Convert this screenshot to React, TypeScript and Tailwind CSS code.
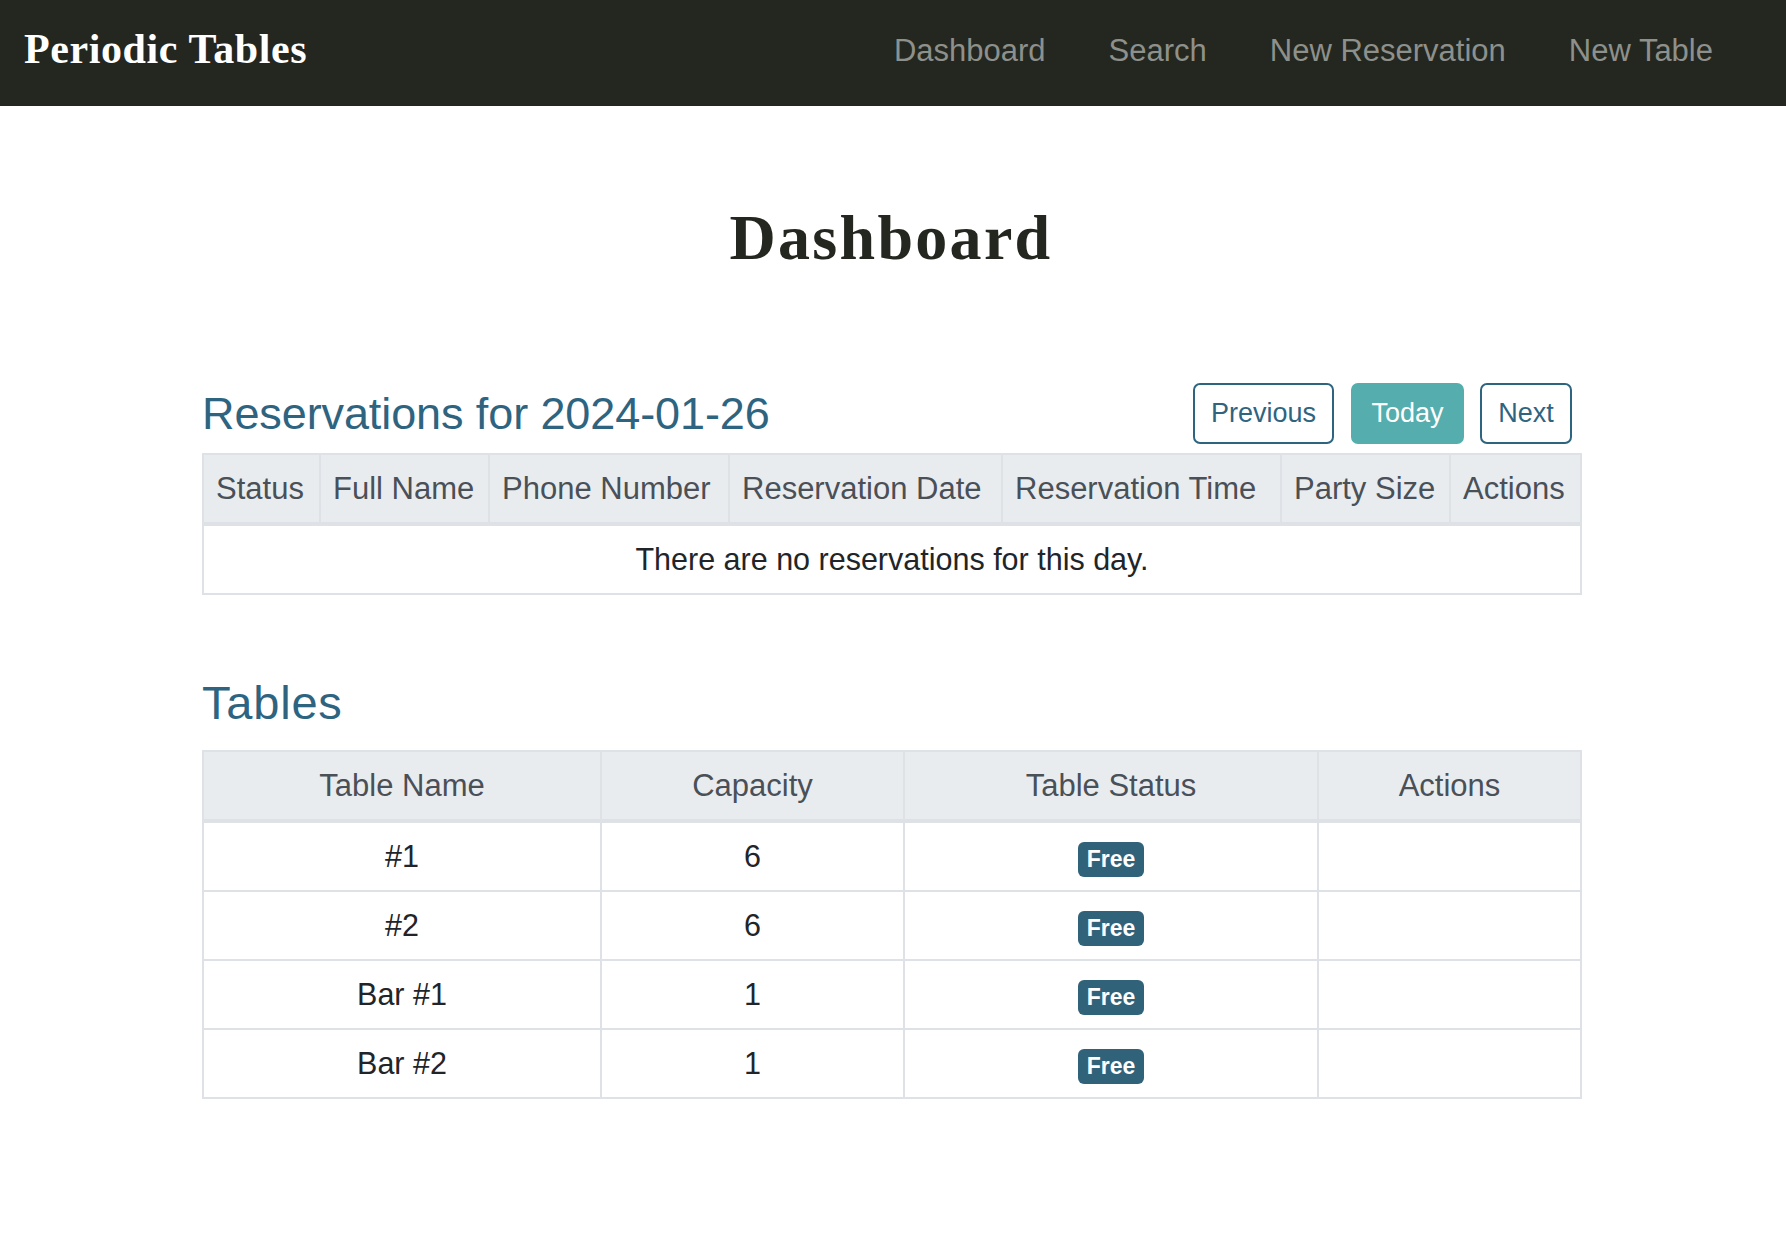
import React from "react";

const sans = { fontFamily: '"Liberation Sans", Arial, Helvetica, sans-serif' };
const serif = { fontFamily: '"Liberation Serif", "Times New Roman", serif' };

const resCols = [
  { label: "Status", w: 117 },
  { label: "Full Name", w: 169 },
  { label: "Phone Number", w: 240 },
  { label: "Reservation Date", w: 273 },
  { label: "Reservation Time", w: 279 },
  { label: "Party Size", w: 169 },
  { label: "Actions", w: 131 },
];

const tableCols = [
  { label: "Table Name", w: 398 },
  { label: "Capacity", w: 303 },
  { label: "Table Status", w: 414 },
  { label: "Actions", w: 263 },
];

const tables = [
  { name: "#1", cap: 6 },
  { name: "#2", cap: 6 },
  { name: "Bar #1", cap: 1 },
  { name: "Bar #2", cap: 1 },
];

export default function App() {
  return (
    <div className="min-h-screen bg-white" style={sans}>
      <nav className="h-[106px] bg-[#23271f] flex items-center justify-between pl-[24px] pr-[73px]">
        <div
          className="text-white text-[42px] font-bold leading-[1.2] tracking-[0.6px] mb-[8px]"
          style={serif}
        >
          Periodic Tables
        </div>
        <div className="flex items-center gap-[63px] mb-[5px]">
          {["Dashboard", "Search", "New Reservation", "New Table"].map((l) => (
            <a key={l} className="text-[31px] leading-[1.2] text-[#8e908c]">
              {l}
            </a>
          ))}
        </div>
      </nav>

      <main className="w-[1378px] ml-[202px]">
        <h1
          className="mt-[94px] text-center text-[64px] leading-[1.2] font-bold tracking-[2.3px] text-[#23271f]"
          style={serif}
        >
          Dashboard
        </h1>

        <div className="mt-[106px] mb-[9px] flex items-end justify-between">
          <h2 className="mb-[3px] text-[45px] leading-[1.2] tracking-[-0.1px] text-[#2e647f]">
            Reservations for 2024-01-26
          </h2>
          <div className="flex pr-[8px]">
            <button className="w-[141px] h-[61px] border-2 border-[#2e647f] rounded-[7px] text-[27px] text-[#2e647f] bg-white">
              Previous
            </button>
            <button className="ml-[17px] w-[113px] h-[61px] border-2 border-[#55adad] rounded-[7px] text-[27px] text-white bg-[#55adad]">
              Today
            </button>
            <button className="ml-[16px] w-[92px] h-[61px] border-2 border-[#2e647f] rounded-[7px] text-[27px] text-[#2e647f] bg-white">
              Next
            </button>
          </div>
        </div>

        <table className="w-full table-fixed border-collapse">
          <colgroup>
            {resCols.map((c) => (
              <col key={c.label} style={{ width: c.w }} />
            ))}
          </colgroup>
          <thead>
            <tr className="bg-[#e9ecef]">
              {resCols.map((c) => (
                <th
                  key={c.label}
                  className="border-2 border-b-4 border-[#dee2e6] text-left font-normal text-[31px] leading-[47px] py-[10px] pl-[12px] pr-0 text-[#495057] whitespace-nowrap"
                >
                  {c.label}
                </th>
              ))}
            </tr>
          </thead>
          <tbody>
            <tr>
              <td
                colSpan={7}
                className="border-2 border-[#dee2e6] text-center text-[30.5px] leading-[47px] py-[10px] text-[#212529]"
              >
                There are no reservations for this day.
              </td>
            </tr>
          </tbody>
        </table>

        <h2 className="mt-[80px] mb-[19px] text-[47px] leading-[1.2] tracking-[0.8px] text-[#2e647f]">
          Tables
        </h2>

        <table className="w-full table-fixed border-collapse">
          <colgroup>
            {tableCols.map((c) => (
              <col key={c.label} style={{ width: c.w }} />
            ))}
          </colgroup>
          <thead>
            <tr className="bg-[#e9ecef]">
              {tableCols.map((c) => (
                <th
                  key={c.label}
                  className="border-2 border-b-4 border-[#dee2e6] text-center font-normal text-[31px] leading-[47px] py-[10px] text-[#495057]"
                >
                  {c.label}
                </th>
              ))}
            </tr>
          </thead>
          <tbody>
            {tables.map((t) => (
              <tr key={t.name}>
                <td className="border-2 border-[#dee2e6] text-center text-[30.5px] leading-[47px] py-[10px] text-[#212529]">
                  {t.name}
                </td>
                <td className="border-2 border-[#dee2e6] text-center text-[30.5px] leading-[47px] py-[10px] text-[#212529]">
                  {t.cap}
                </td>
                <td className="border-2 border-[#dee2e6] text-center text-[30.5px] leading-[47px] py-[10px] text-[#212529]">
                  <span className="inline-block align-middle bg-[#30627a] text-white font-bold text-[23px] leading-none px-[9px] py-[6px] rounded-[6px]">
                    Free
                  </span>
                </td>
                <td className="border-2 border-[#dee2e6] text-center text-[30.5px] leading-[47px] py-[10px] text-[#212529]"></td>
              </tr>
            ))}
          </tbody>
        </table>
      </main>
    </div>
  );
}
